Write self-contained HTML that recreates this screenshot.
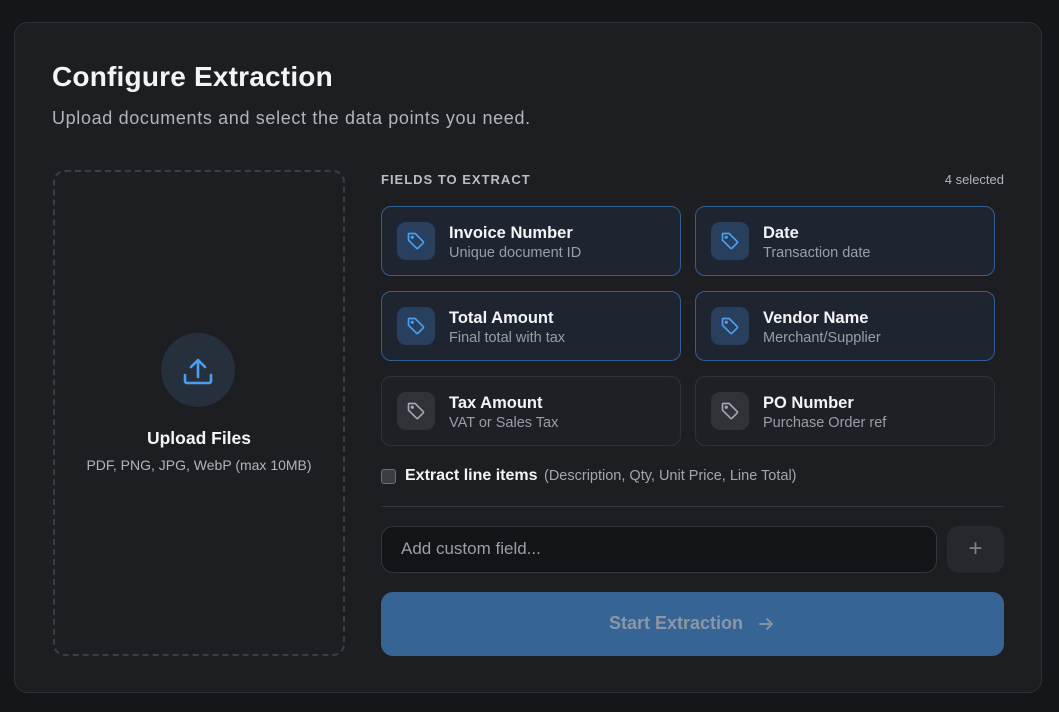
<!DOCTYPE html>
<html><head><style>
*{box-sizing:border-box;margin:0;padding:0}
body{width:1059px;height:712px;background:#151619;font-family:"Liberation Sans",sans-serif;position:relative;overflow:hidden}
.card{position:absolute;left:14px;top:22px;width:1028px;height:671px;background:#1c1e22;border:1px solid #2e3137;border-radius:14px}
.abs{position:absolute}
h1{position:absolute;left:52px;top:61px;font-size:28px;font-weight:700;color:#f3f4f6;letter-spacing:0.2px}
.sub{left:52px;top:108px;font-size:18px;color:#b1b4ba;letter-spacing:0.65px}
.up{left:53px;top:170px;width:292px;height:486px;border:2px dashed #3a3d43;border-radius:12px}
.circ{left:161px;top:333px;width:74px;height:74px;border-radius:50%;background:#26303d}
.f{position:absolute;width:300px;height:70px;border-radius:10px;border:1px solid #2f3238;background:#1e2025}
.f.s{border-color:#2f5f94;background:#1f2530}
.ic{position:absolute;left:15px;top:15px;width:38px;height:38px;border-radius:9px;background:#2f3237}
.f.s .ic{background:#28405e}
.ic svg{position:absolute;left:9px;top:9px}
.t{position:absolute;left:67px;top:17px;font-size:16.5px;font-weight:700;color:#f3f4f6}
.d{position:absolute;left:67px;top:38px;font-size:14.5px;color:#9a9ea5}
</style></head><body>
<div class="card"></div>
<h1>Configure Extraction</h1>
<div class="abs sub">Upload documents and select the data points you need.</div>
<div class="abs up"></div>
<div class="abs circ"><svg width="74" height="74" viewBox="0 0 74 74" fill="none" stroke="#4a9ff0" stroke-width="2.6" stroke-linecap="round" stroke-linejoin="round"><path d="M37 44V27M30 34l7-7 7 7M24 42v6a2 2 0 0 0 2 2h22a2 2 0 0 0 2-2v-6"/></svg></div>
<div class="abs" style="left:53px;width:292px;top:428px;text-align:center;font-size:17.5px;font-weight:700;color:#f3f4f6">Upload Files</div>
<div class="abs" style="left:53px;width:292px;top:457px;text-align:center;font-size:14px;color:#b1b4ba">PDF, PNG, JPG, WebP (max 10MB)</div>
<div class="abs" style="left:381px;top:172px;font-size:13px;font-weight:700;letter-spacing:1px;color:#b9bcc2">FIELDS TO EXTRACT</div>
<div class="abs" style="right:55px;top:172px;font-size:13px;color:#b1b4ba">4 selected</div>

<div class="f s" style="left:381px;top:206px"><div class="ic"><svg width="20" height="20" viewBox="0 0 24 24" fill="none" stroke="#4a9ff0" stroke-width="2" stroke-linejoin="round"><path d="M3 4v7l9.5 9.5a1.5 1.5 0 0 0 2 0l6-6a1.5 1.5 0 0 0 0-2L11 3H4a1 1 0 0 0-1 1z"/><circle cx="7.5" cy="7.5" r="1" fill="#4a9ff0"/></svg></div><div class="t">Invoice Number</div><div class="d">Unique document ID</div></div>
<div class="f s" style="left:695px;top:206px"><div class="ic"><svg width="20" height="20" viewBox="0 0 24 24" fill="none" stroke="#4a9ff0" stroke-width="2" stroke-linejoin="round"><path d="M3 4v7l9.5 9.5a1.5 1.5 0 0 0 2 0l6-6a1.5 1.5 0 0 0 0-2L11 3H4a1 1 0 0 0-1 1z"/><circle cx="7.5" cy="7.5" r="1" fill="#4a9ff0"/></svg></div><div class="t">Date</div><div class="d">Transaction date</div></div>
<div class="f s" style="left:381px;top:291px"><div class="ic"><svg width="20" height="20" viewBox="0 0 24 24" fill="none" stroke="#4a9ff0" stroke-width="2" stroke-linejoin="round"><path d="M3 4v7l9.5 9.5a1.5 1.5 0 0 0 2 0l6-6a1.5 1.5 0 0 0 0-2L11 3H4a1 1 0 0 0-1 1z"/><circle cx="7.5" cy="7.5" r="1" fill="#4a9ff0"/></svg></div><div class="t">Total Amount</div><div class="d">Final total with tax</div></div>
<div class="f s" style="left:695px;top:291px"><div class="ic"><svg width="20" height="20" viewBox="0 0 24 24" fill="none" stroke="#4a9ff0" stroke-width="2" stroke-linejoin="round"><path d="M3 4v7l9.5 9.5a1.5 1.5 0 0 0 2 0l6-6a1.5 1.5 0 0 0 0-2L11 3H4a1 1 0 0 0-1 1z"/><circle cx="7.5" cy="7.5" r="1" fill="#4a9ff0"/></svg></div><div class="t">Vendor Name</div><div class="d">Merchant/Supplier</div></div>
<div class="f" style="left:381px;top:376px"><div class="ic"><svg width="20" height="20" viewBox="0 0 24 24" fill="none" stroke="#a3a7ad" stroke-width="2" stroke-linejoin="round"><path d="M3 4v7l9.5 9.5a1.5 1.5 0 0 0 2 0l6-6a1.5 1.5 0 0 0 0-2L11 3H4a1 1 0 0 0-1 1z"/><circle cx="7.5" cy="7.5" r="1" fill="#a3a7ad"/></svg></div><div class="t">Tax Amount</div><div class="d">VAT or Sales Tax</div></div>
<div class="f" style="left:695px;top:376px"><div class="ic"><svg width="20" height="20" viewBox="0 0 24 24" fill="none" stroke="#a3a7ad" stroke-width="2" stroke-linejoin="round"><path d="M3 4v7l9.5 9.5a1.5 1.5 0 0 0 2 0l6-6a1.5 1.5 0 0 0 0-2L11 3H4a1 1 0 0 0-1 1z"/><circle cx="7.5" cy="7.5" r="1" fill="#a3a7ad"/></svg></div><div class="t">PO Number</div><div class="d">Purchase Order ref</div></div>

<div class="abs" style="left:381px;top:469px;width:15px;height:15px;border:1px solid #6b6f76;border-radius:3px;background:#3a3d42"></div>
<div class="abs" style="left:405px;top:467px;font-size:16px;font-weight:700;color:#f3f4f6">Extract line items</div>
<div class="abs" style="left:544px;top:468px;font-size:14.5px;color:#a3a7ad">(Description, Qty, Unit Price, Line Total)</div>
<div class="abs" style="left:381px;top:506px;width:623px;height:1px;background:#34373d"></div>
<div class="abs" style="left:381px;top:526px;width:556px;height:47px;border:1px solid #34373d;border-radius:12px;background:#131418"></div>
<div class="abs" style="left:401px;top:539px;font-size:17px;color:#9a9ea5">Add custom field...</div>
<div class="abs" style="left:947px;top:526px;width:57px;height:47px;border-radius:12px;background:#26282d;color:#7d8188;font-size:24px;text-align:center;line-height:45px">+</div>
<div class="abs" style="left:381px;top:592px;width:623px;height:64px;border-radius:12px;background:#366494"></div>
<div class="abs" style="left:609px;top:613px;font-size:18px;font-weight:700;color:#8b97a5">Start Extraction</div>
<svg class="abs" style="left:758px;top:616px" width="16" height="16" viewBox="0 0 16 16" fill="none" stroke="#8b97a5" stroke-width="1.8" stroke-linecap="round" stroke-linejoin="round"><path d="M2 8h12M9 3l5 5-5 5"/></svg>
</body></html>
